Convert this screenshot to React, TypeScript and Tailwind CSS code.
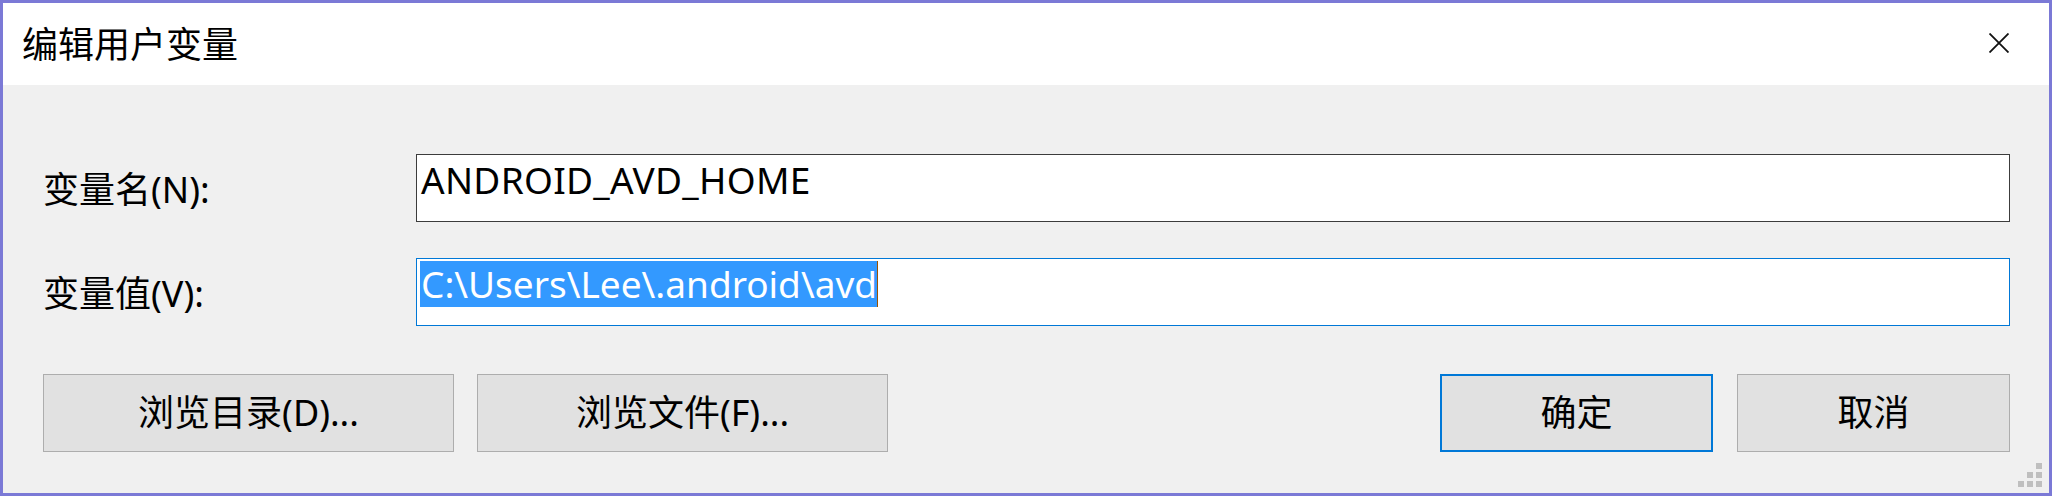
import React from "react";

const F = { fontFamily: '"Noto Sans", "Noto Sans CJK SC", sans-serif' };

export default function App() {
  return (
    <div
      className="relative w-[2052px] h-[496px] border-[3px] border-[#7b79d6] flex flex-col bg-[#f0f0f0] text-black"
      style={F}
    >
      {/* Title bar */}
      <div className="h-[82px] bg-white flex items-center justify-between pl-[19px] pr-[40px]">
        <span className="text-[36px] leading-none mt-[1px]">编辑用户变量</span>
        <svg width="20" height="20" viewBox="0 0 20 20" className="mt-[-2px]">
          <path d="M0.5 0.5 L19.5 19.5 M19.5 0.5 L0.5 19.5" stroke="#111" strokeWidth="1.8" fill="none" />
        </svg>
      </div>

      {/* Body */}
      <div className="flex-1 flex flex-col pl-[40px] pr-[39px] pt-[69px]">
        <div className="flex items-center h-[68px]">
          <div className="w-[373px] text-[36px] leading-none mt-[3px]">变量名(N):</div>
          <div className="flex-1 h-[68px] border border-[#3c3c3c] bg-white pl-[4px] pt-[2px]">
            <span className="inline-block h-[46px] leading-[46px] text-[37px] tracking-[0.3px]">ANDROID_AVD_HOME</span>
          </div>
        </div>
        <div className="flex items-center h-[68px] mt-[36px]">
          <div className="w-[373px] text-[36px] leading-none mt-[3px]">变量值(V):</div>
          <div className="flex-1 h-[68px] border border-[#0078d7] bg-white pl-[3px] pt-[2px] flex items-start">
            <span className="inline-block h-[46px] leading-[46px] text-[37px] bg-[#3399ff] text-white pl-[1px]">
              C:\Users\Lee\.android\avd
            </span>
            <span className="inline-block w-[1px] h-[46px] bg-[#9a5200]" />
          </div>
        </div>

        <div className="flex h-[78px] mt-[48px] text-[36px]">
          <div className="w-[411px] h-full border border-[#adadad] bg-[#e1e1e1] flex items-center justify-center">
            浏览目录(D)...
          </div>
          <div className="w-[411px] h-full ml-[23px] border border-[#adadad] bg-[#e1e1e1] flex items-center justify-center">
            浏览文件(F)...
          </div>
          <div className="flex-1" />
          <div className="w-[273px] h-full border-2 border-[#0078d7] bg-[#e1e1e1] flex items-center justify-center">
            确定
          </div>
          <div className="w-[273px] h-full ml-[24px] border border-[#adadad] bg-[#e1e1e1] flex items-center justify-center">
            取消
          </div>
        </div>
      </div>

      {/* Size gripper */}
      <svg width="24" height="24" viewBox="0 0 24 24" className="absolute left-[2015px] top-[460px]">
        <rect x="18" y="0" width="6" height="6" fill="#bfbfbf" />
        <rect x="9" y="9" width="6" height="6" fill="#bfbfbf" />
        <rect x="18" y="9" width="6" height="6" fill="#bfbfbf" />
        <rect x="0" y="18" width="6" height="6" fill="#bfbfbf" />
        <rect x="9" y="18" width="6" height="6" fill="#bfbfbf" />
        <rect x="18" y="18" width="6" height="6" fill="#bfbfbf" />
      </svg>
    </div>
  );
}
